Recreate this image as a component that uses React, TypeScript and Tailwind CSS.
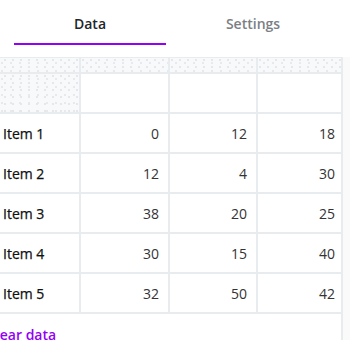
import React from "react";

const rows = [
  ["Item 1", 0, 12, 18],
  ["Item 2", 12, 4, 30],
  ["Item 3", 38, 20, 25],
  ["Item 4", 30, 15, 40],
  ["Item 5", 32, 50, 42],
];

const dotted =
  "bg-[#f8f9fa] bg-[radial-gradient(circle_at_2px_2px,#e5e8ea_0.8px,transparent_1.2px),radial-gradient(circle_at_6px_5px,#e7e9ec_0.8px,transparent_1.2px)] bg-[length:8px_7px,9px_8px]";

export default function App() {
  return (
    <div
      className="w-[350px] h-[340px] bg-white overflow-hidden"
      style={{ fontFamily: '"Open Sans", "Liberation Sans", sans-serif' }}
    >
      {/* Tabs */}
      <div className="flex pl-[14px] gap-[11px] h-[57px] pt-[13px]">
        <div className="w-[152px] flex flex-col items-center">
          <div className="h-[30px] text-[14px] font-semibold text-[#212529] leading-[20px] pt-[1px]">Data</div>
          <div className="w-full h-[2px] bg-[#9400f5]" />
        </div>
        <div className="w-[152px] flex flex-col items-center">
          <div className="h-[30px] text-[14px] font-semibold text-[#7b7f84] leading-[20px] pt-[1px]">Settings</div>
        </div>
      </div>

      {/* Table area */}
      <div className="flex">
        <div className="w-[343px] overflow-hidden border-r-2 border-[#e9ecef]">
          <div className="-ml-[13px]">
            <div className="grid grid-cols-[92px_87px_86px_85px] gap-[2px] bg-[#e9ecef] pt-[1px] pb-[2px] w-max">
              <div className={`h-[14px] ${dotted}`} />
              <div className={`h-[14px] ${dotted}`} />
              <div className={`h-[14px] ${dotted}`} />
              <div className={`h-[14px] ${dotted}`} />

              <div className={`h-[38px] ${dotted}`} />
              <div className="h-[38px] bg-white" />
              <div className="h-[38px] bg-white" />
              <div className="h-[38px] bg-white" />

              {rows.map((r) => (
                <React.Fragment key={r[0] as string}>
                  <div className="h-[38px] bg-white flex items-center pl-[16px] text-[14px] font-[500] text-[#111] [-webkit-text-stroke:0.25px_#111]">
                    {r[0]}
                  </div>
                  <div className="h-[38px] bg-white flex items-center justify-end pr-[9px] text-[14px] text-[#333]">
                    {r[1]}
                  </div>
                  <div className="h-[38px] bg-white flex items-center justify-end pr-[9px] text-[14px] text-[#333]">
                    {r[2]}
                  </div>
                  <div className="h-[38px] bg-white flex items-center justify-end pr-[8px] text-[14px] text-[#333]">
                    {r[3]}
                  </div>
                </React.Fragment>
              ))}
            </div>
            <div className="pt-[11px] text-[14px] font-semibold text-[#9400f5] leading-[20px]">
              Clear data
            </div>
          </div>
        </div>
        <div className="flex-1 bg-[#fafafa] h-[290px]" />
      </div>
    </div>
  );
}
